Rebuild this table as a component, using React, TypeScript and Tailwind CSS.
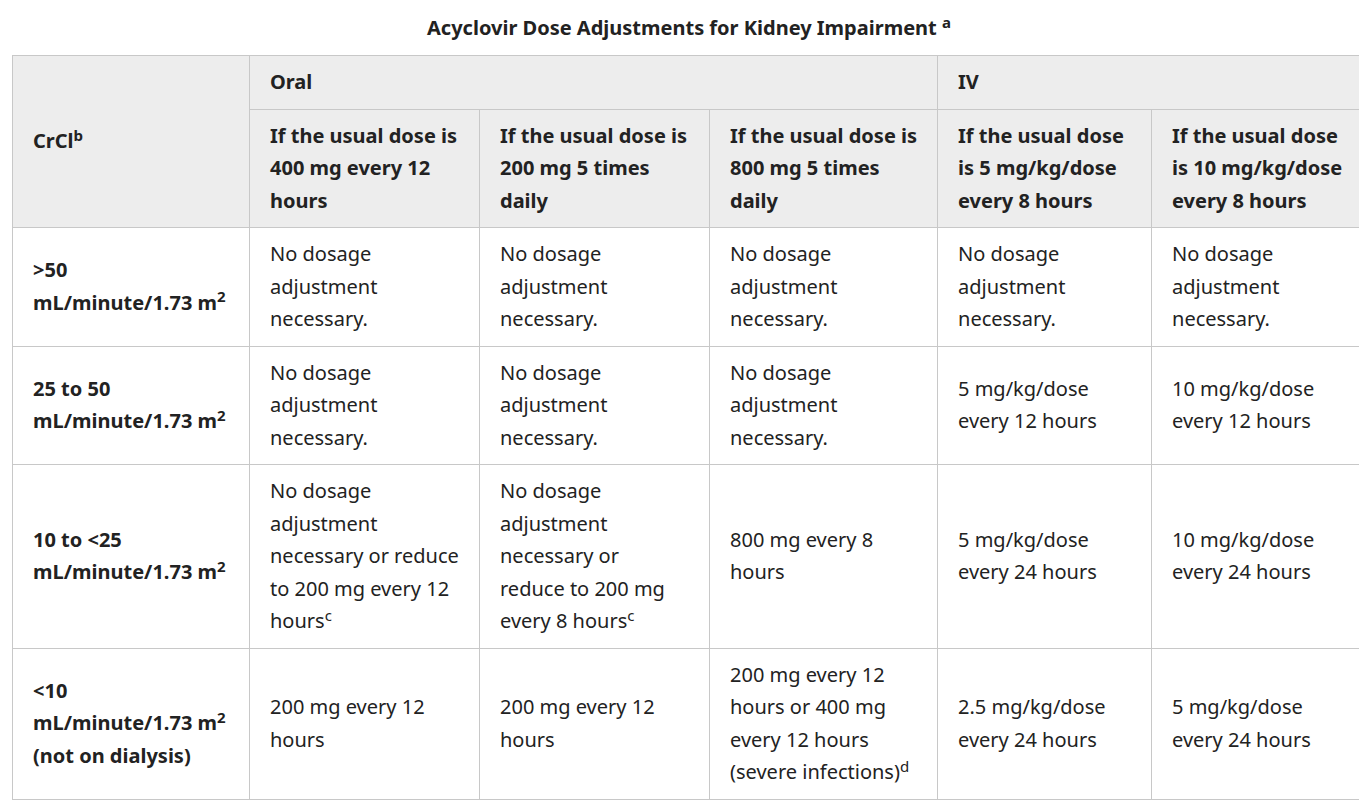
import React from "react";

const td = "border border-[#c8c8c8] px-5 py-[10px] align-middle text-left";
const th = "border border-[#c8c8c8] px-5 py-[10px] align-middle text-left font-bold bg-[#ededed]";

const nd = "No dosage adjustment necessary.";

function Sup({ c }: { c: string }) {
  return <sup className="text-[15px]">{c}</sup>;
}

function Crcl({ a, b }: { a: string; b?: string }) {
  return (
    <>
      {a}
      <br />
      mL/minute/1.73 m<sup className="text-[15px]">2</sup>
      {b && (
        <>
          <br />
          {b}
        </>
      )}
    </>
  );
}

export default function App() {
  return (
    <div className="w-[1359px] h-[808px] overflow-hidden bg-white">
      <div
        className="w-[1378px] text-[#222222] text-[20px] leading-[32.5px]"
        style={{ fontFamily: '"Noto Sans", "Open Sans", sans-serif' }}
      >
        <div className="text-center font-bold text-[20px] pt-[12px] h-[55px]">
          Acyclovir Dose Adjustments for Kidney Impairment <Sup c="a" />
        </div>
        <table className="ml-[12px] border-collapse table-fixed w-[1354px]">
          <colgroup>
            <col className="w-[237px]" />
            <col className="w-[230px]" />
            <col className="w-[230px]" />
            <col className="w-[228px]" />
            <col className="w-[214px]" />
            <col className="w-[215px]" />
          </colgroup>
          <thead>
            <tr>
              <th className={th} rowSpan={2}>
                CrCl<Sup c="b" />
              </th>
              <th className={th} colSpan={3}>
                Oral
              </th>
              <th className={th} colSpan={2}>
                IV
              </th>
            </tr>
            <tr>
              <th className={th}>If the usual dose is 400 mg every 12 hours</th>
              <th className={th}>If the usual dose is 200 mg 5 times daily</th>
              <th className={th}>
                <span className="whitespace-nowrap">If the usual dose is</span> 800 mg 5 times daily
              </th>
              <th className={th}>If the usual dose is 5 mg/kg/dose every 8 hours</th>
              <th className={th}>If the usual dose is 10 mg/kg/dose every 8 hours</th>
            </tr>
          </thead>
          <tbody>
            <tr>
              <td className={td + " font-bold"}>
                <Crcl a=">50" />
              </td>
              <td className={td}>{nd}</td>
              <td className={td}>{nd}</td>
              <td className={td}>{nd}</td>
              <td className={td}>{nd}</td>
              <td className={td}>{nd}</td>
            </tr>
            <tr>
              <td className={td + " font-bold"}>
                <Crcl a="25 to 50" />
              </td>
              <td className={td}>{nd}</td>
              <td className={td}>{nd}</td>
              <td className={td}>{nd}</td>
              <td className={td}>5 mg/kg/dose every 12 hours</td>
              <td className={td}>10 mg/kg/dose every 12 hours</td>
            </tr>
            <tr>
              <td className={td + " font-bold"}>
                <Crcl a="10 to <25" />
              </td>
              <td className={td}>
                No dosage adjustment necessary or reduce to 200 mg every 12 hours
                <Sup c="c" />
              </td>
              <td className={td}>
                No dosage
                <br />
                adjustment
                <br />
                necessary or
                <br />
                reduce to 200 mg
                <br />
                every 8 hours
                <Sup c="c" />
              </td>
              <td className={td}>800 mg every 8 hours</td>
              <td className={td}>5 mg/kg/dose every 24 hours</td>
              <td className={td}>10 mg/kg/dose every 24 hours</td>
            </tr>
            <tr>
              <td className={td + " font-bold"}>
                <Crcl a="<10" b="(not on dialysis)" />
              </td>
              <td className={td}>200 mg every 12 hours</td>
              <td className={td}>200 mg every 12 hours</td>
              <td className={td}>
                200 mg every 12 hours or 400 mg every 12 hours (severe infections)
                <Sup c="d" />
              </td>
              <td className={td}>2.5 mg/kg/dose every 24 hours</td>
              <td className={td}>5 mg/kg/dose every 24 hours</td>
            </tr>
          </tbody>
        </table>
      </div>
    </div>
  );
}
